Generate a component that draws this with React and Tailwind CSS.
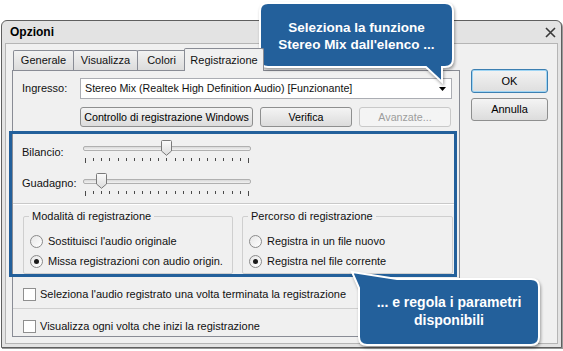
import React from 'react';

const font = "font-['Liberation_Sans',Arial,sans-serif]";

function Button({ children, className = '', disabled = false, primary = false }) {
  return (
    <div
      className={`flex items-center justify-center rounded-[3px] border bg-linear-to-b ${
        disabled
          ? 'border-[#c9c9c9] from-[#f4f4f4] to-[#f4f4f4] text-[#9c9c9c]'
          : primary
          ? 'border-[#3c7fb1] from-[#f3f3f3] to-[#dedede] text-black shadow-[inset_0_0_0_1px_#9fd5f4]'
          : 'border-[#8e8f8f] from-[#f4f4f4] to-[#dcdcdc] text-black'
      } ${className}`}
    >
      {children}
    </div>
  );
}

function Slider({ thumb }) {
  const ticks = Array.from({ length: 21 });
  return (
    <div className="relative w-[168px] h-[24px]">
      <div className="absolute left-0 top-[6px] w-[168px] h-[5px] rounded-[2px] border border-[#b0b0b0] bg-linear-to-b from-[#d9d9d9] to-[#f2f2f2]" />
      <svg className={`absolute top-0 ${thumb}`} width="11" height="16" viewBox="0 0 11 16">
        <defs>
          <linearGradient id="tg" x1="0" x2="0" y1="0" y2="1">
            <stop offset="0" stopColor="#fbfbfb" />
            <stop offset="1" stopColor="#dcdcdc" />
          </linearGradient>
        </defs>
        <path d="M0.5 1.5 Q0.5 0.5 1.5 0.5 H9.5 Q10.5 0.5 10.5 1.5 V11 L5.5 15.3 L0.5 11 Z" fill="url(#tg)" stroke="#7a7a7a" />
      </svg>
      <div className="absolute left-[2px] top-[18px] w-[164px] flex justify-between items-start">
        {ticks.map((_, i) => (
          <div key={i} className={`w-px bg-[#4a4a4a] ${i === 0 || i === 20 ? 'h-[5px]' : 'h-[3px]'}`} />
        ))}
      </div>
    </div>
  );
}

function Radio({ checked, label }) {
  return (
    <div className="flex items-center gap-[5px] h-[14px]">
      <div className="w-[13px] h-[13px] rounded-full border border-[#8a8a8a] bg-linear-to-br from-[#e6e6e6] to-white flex items-center justify-center">
        {checked && <div className="w-[5px] h-[5px] rounded-full bg-[#1a1a1a]" />}
      </div>
      <span>{label}</span>
    </div>
  );
}

function Checkbox({ label }) {
  return (
    <div className="flex items-center gap-[4px] h-[14px]">
      <div className="w-[13px] h-[13px] border border-[#8f8f8f] bg-white" />
      <span>{label}</span>
    </div>
  );
}

function Tab({ children, className = '', selected = false }) {
  return (
    <div
      className={`flex items-center justify-center border border-b-0 border-[#898c95] rounded-t-[2px] ${
        selected ? 'h-[23px] bg-[#f0f0f0] relative z-10 -mb-px' : 'h-[20px] mt-[2px] bg-linear-to-b from-[#f2f2f2] to-[#dcdcdc]'
      } ${className}`}
    >
      {children}
    </div>
  );
}

export default function App() {
  return (
    <div className={`relative w-[563px] h-[351px] bg-white overflow-hidden text-[11px] text-[#111] ${font}`}>
      {/* window */}
      <div className="ml-[1px] mt-[20px] w-[561px] h-[328px] rounded-t-[6px] border border-[#5f5f5f] bg-[#e3e3e3] shadow-[1px_1px_0_#9a9a9a] flex flex-col">
        <div className="h-[22px] flex items-center justify-between pl-[8px] pr-[5px]">
          <span className="font-bold text-[12px] text-black">Opzioni</span>
          <svg width="11" height="11" viewBox="0 0 11 11">
            <path d="M1 1 L10 10 M10 1 L1 10" stroke="#3a3a3a" strokeWidth="1.6" />
          </svg>
        </div>
        <div className="mx-[3px] mb-[3px] flex-1 border border-[#b5b5b5] bg-[#f0f0f0] flex">
          {/* left */}
          <div className="pl-[6px] pt-[4px]">
            <div className="flex items-end h-[22px] pl-[1px]">
              <Tab className="w-[61px]">Generale</Tab>
              <Tab className="w-[65px] -ml-px">Visualizza</Tab>
              <Tab className="w-[49px] -ml-px">Colori</Tab>
              <Tab selected className="w-[80px] -ml-[2px]">Registrazione</Tab>
            </div>
            <div className="w-[448px] h-[267px] border border-[#898c95] bg-[#f0f0f0]">
              <div className="mt-[7px] pl-[9px] flex items-center">
                <span className="w-[58px]">Ingresso:</span>
                <div className="w-[372px] h-[21px] border border-[#abadb3] bg-white flex items-center justify-between pl-[4px] pr-[5px]">
                  <span className="text-[10.7px]">Stereo Mix (Realtek High Definition Audio) [Funzionante]</span>
                  <svg width="7" height="4" viewBox="0 0 7 4">
                    <path d="M0 0 H7 L3.5 4 Z" fill="#000" />
                  </svg>
                </div>
              </div>
              <div className="mt-[8px] pl-[67px] flex gap-[7px] h-[20px] text-[10.7px]">
                <Button className="w-[173px]">Controllo di registrazione Windows</Button>
                <Button className="w-[92px]">Verifica</Button>
                <Button disabled className="w-[92px]">Avanzate...</Button>
              </div>
              <div className="mt-[13px] pl-[9px] flex items-start">
                <span className="w-[61px] mt-[4px]">Bilancio:</span>
                <Slider thumb="left-[78px]" />
              </div>
              <div className="mt-[9px] pl-[9px] flex items-start">
                <span className="w-[61px] mt-[2px]">Guadagno:</span>
                <Slider thumb="left-[13px]" />
              </div>
              <div className="mt-[6px] h-px bg-[#c9c9c9] mr-[2px]" />
              <div className="h-px bg-white mr-[2px]" />
              <div className="mt-[5px] flex">
                <fieldset className="ml-[10px] w-[210px] h-[64px] border border-[#cfcfcf] rounded-[2px]">
                  <legend className="ml-[5px] px-[3px] leading-[13px]">Modalità di registrazione</legend>
                  <div className="pl-[6px] pt-[11px] flex flex-col gap-[6px]">
                    <Radio label="Sostituisci l'audio originale" />
                    <Radio checked label="Missa registrazioni con audio origin." />
                  </div>
                </fieldset>
                <fieldset className="ml-[9px] w-[211px] h-[64px] border border-[#cfcfcf] rounded-[2px]">
                  <legend className="ml-[5px] px-[3px] leading-[13px]">Percorso di registrazione</legend>
                  <div className="pl-[6px] pt-[11px] flex flex-col gap-[6px]">
                    <Radio label="Registra in un file nuovo" />
                    <Radio checked label="Registra nel file corrente" />
                  </div>
                </fieldset>
              </div>
              <div className="mt-[13px] pl-[10px]">
                <Checkbox label="Seleziona l'audio registrato una volta terminata la registrazione" />
              </div>
              <div className="mt-[7px] h-px bg-[#cfcfcf] mr-[2px]" />
              <div className="mt-[10px] pl-[10px]">
                <Checkbox label="Visualizza ogni volta che inizi la registrazione" />
              </div>
            </div>
          </div>
          {/* right */}
          <div className="pl-[11px] pt-[25px] flex flex-col gap-[5px]">
            <Button primary className="w-[77px] h-[24px]">OK</Button>
            <Button className="w-[77px] h-[23px]">Annulla</Button>
          </div>
        </div>
      </div>

      {/* highlight frame */}
      <div className="absolute left-[9px] top-[131px] w-[448px] h-[146px] border-[3px] border-[#23609b] pointer-events-none" />

      {/* callout 1 */}
      <svg className="absolute left-[258px] top-[1px] drop-shadow-[1px_2px_1.5px_rgba(0,0,0,0.35)]" width="200" height="86" viewBox="0 0 200 86">
        <path
          d="M10 2 H187 Q195 2 195 10 V58 Q195 66 187 66 H184 V81 L168 66 H10 Q2 66 2 58 V10 Q2 2 10 2 Z"
          fill="#23609b"
          stroke="#fff"
          strokeWidth="2"
        />
      </svg>
      <div className="absolute left-[260px] top-[19px] w-[193px] text-center text-white font-bold text-[13.5px] leading-[17px]">
        Seleziona la funzione
        <br />
        Stereo Mix dall'elenco ...
      </div>

      {/* callout 2 */}
      <svg className="absolute left-[350px] top-[270px] drop-shadow-[1px_2px_1.5px_rgba(0,0,0,0.35)]" width="195" height="80" viewBox="0 0 195 80">
        <path
          d="M47 9 H181 Q189 9 189 17 V67 Q189 75 181 75 H17 Q9 75 9 67 V18 L2 2 Z"
          fill="#23609b"
          stroke="#fff"
          strokeWidth="2"
        />
      </svg>
      <div className="absolute left-[359px] top-[293px] w-[180px] text-center text-white font-bold text-[14px] leading-[18px]">
        ... e regola i parametri
        <br />
        disponibili
      </div>
    </div>
  );
}
